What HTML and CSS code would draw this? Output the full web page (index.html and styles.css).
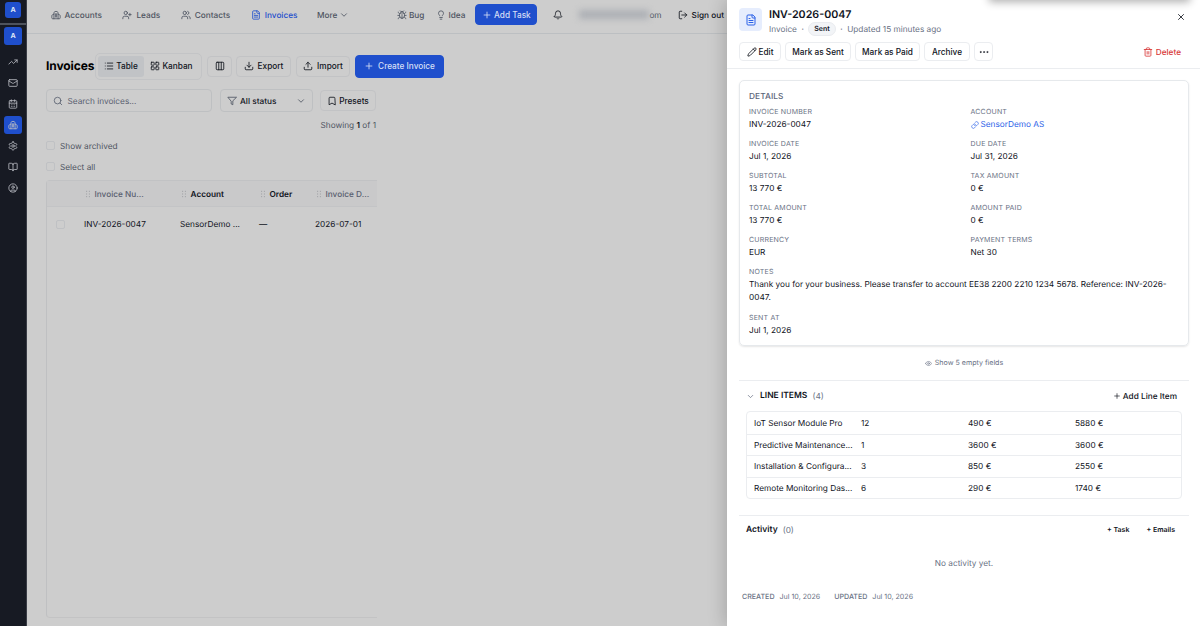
FILE: index.html
```html
<!DOCTYPE html>
<html lang="en">
<head>
  <meta charset="UTF-8">
  <meta name="viewport" content="width=device-width, initial-scale=1.0">
  <title>Invoices</title>
  <link rel="stylesheet" href="styles.css">
</head>
<body>

  <!-- Icons -->
  <svg class="sprite" xmlns="http://www.w3.org/2000/svg">
    <symbol id="building" viewBox="0 0 24 24"><path d="M7 21V6.500a2 2 0 0 1 1.200-1.800L12 3l3.800 1.700A2 2 0 0 1 17 6.500V21"/><path d="M7 10l-3.500 1.500A2 2 0 0 0 2 13.400V19a2 2 0 0 0 2 2h16a2 2 0 0 0 2-2v-5.600a2 2 0 0 0-1.500-1.900L17 10"/><path d="M10.500 9v8M13.500 9v8"/></symbol>
    <symbol id="user-plus" viewBox="0 0 24 24"><path d="M16 21v-2a4 4 0 0 0-4-4H6a4 4 0 0 0-4 4v2"/><circle cx="9" cy="7" r="4"/><path d="M19 8v6M22 11h-6"/></symbol>
    <symbol id="users" viewBox="0 0 24 24"><path d="M16 21v-2a4 4 0 0 0-4-4H6a4 4 0 0 0-4 4v2"/><circle cx="9" cy="7" r="4"/><path d="M22 21v-2a4 4 0 0 0-3-3.870M16 3.130a4 4 0 0 1 0 7.750"/></symbol>
    <symbol id="file" viewBox="0 0 24 24"><path d="M15 2H6a2 2 0 0 0-2 2v16a2 2 0 0 0 2 2h12a2 2 0 0 0 2-2V7Z"/><path d="M14 2v4a2 2 0 0 0 2 2h4M10 9H8M16 13H8M16 17H8"/></symbol>
    <symbol id="chevron" viewBox="0 0 24 24"><path d="m6 9 6 6 6-6"/></symbol>
    <symbol id="bug" viewBox="0 0 24 24"><path d="m8 2 1.880 1.880M14.120 3.880 16 2M9 7.130v-1a3 3 0 1 1 6 0v1"/><path d="M12 20a6 6 0 0 1-6-6v-3a4 4 0 0 1 4-4h4a4 4 0 0 1 4 4v3a6 6 0 0 1-6 6M12 20v-9"/><path d="M6.500 9C4.600 8.800 3 7.100 3 5M6 13H2M3 21c0-2.100 1.700-3.900 3.800-4M21 5c0 2.100-1.600 3.800-3.500 4M22 13h-4M17.200 17c2.100.1 3.800 1.900 3.800 4"/></symbol>
    <symbol id="bulb" viewBox="0 0 24 24"><path d="M15 14c.2-1 .7-1.700 1.500-2.500C17.500 10.600 18 9.300 18 8A6 6 0 0 0 6 8c0 1 .2 2.200 1.500 3.500.7.7 1.300 1.500 1.500 2.500M9 18h6M10 22h4"/></symbol>
    <symbol id="plus" viewBox="0 0 24 24"><path d="M5 12h14M12 5v14"/></symbol>
    <symbol id="bell" viewBox="0 0 24 24"><path d="M10.300 21a1.940 1.940 0 0 0 3.400 0"/><path d="M3.300 15.300A1 1 0 0 0 4 17h16a1 1 0 0 0 .7-1.700C19.400 14 18 12.500 18 8A6 6 0 0 0 6 8c0 4.500-1.400 6-2.700 7.300"/></symbol>
    <symbol id="logout" viewBox="0 0 24 24"><path d="M9 21H5a2 2 0 0 1-2-2V5a2 2 0 0 1 2-2h4M16 17l5-5-5-5M21 12H9"/></symbol>
    <symbol id="trend" viewBox="0 0 24 24"><path d="m22 7-8.500 8.500-5-5L2 17M16 7h6v6"/></symbol>
    <symbol id="mail" viewBox="0 0 24 24"><rect x="2" y="4" width="20" height="16" rx="2"/><path d="m22 7-8.970 5.700a1.940 1.940 0 0 1-2.060 0L2 7"/></symbol>
    <symbol id="calendar" viewBox="0 0 24 24"><path d="M8 2v4M16 2v4M3 10h18M8 14h.01M12 14h.01M16 14h.01M8 18h.01M12 18h.01M16 18h.01"/><rect x="3" y="4" width="18" height="18" rx="2"/></symbol>
    <symbol id="gear" viewBox="0 0 24 24"><path d="M12.220 2h-.44a2 2 0 0 0-2 2v.18a2 2 0 0 1-1 1.730l-.43.25a2 2 0 0 1-2 0l-.15-.08a2 2 0 0 0-2.730.73l-.22.38a2 2 0 0 0 .73 2.730l.15.1a2 2 0 0 1 1 1.720v.51a2 2 0 0 1-1 1.740l-.15.09a2 2 0 0 0-.73 2.730l.22.38a2 2 0 0 0 2.730.73l.15-.08a2 2 0 0 1 2 0l.43.25a2 2 0 0 1 1 1.730V20a2 2 0 0 0 2 2h.44a2 2 0 0 0 2-2v-.18a2 2 0 0 1 1-1.730l.43-.25a2 2 0 0 1 2 0l.15.08a2 2 0 0 0 2.730-.73l.22-.39a2 2 0 0 0-.73-2.730l-.15-.08a2 2 0 0 1-1-1.740v-.5a2 2 0 0 1 1-1.740l.15-.09a2 2 0 0 0 .73-2.730l-.22-.38a2 2 0 0 0-2.730-.73l-.15.08a2 2 0 0 1-2 0l-.43-.25a2 2 0 0 1-1-1.730V4a2 2 0 0 0-2-2z"/><circle cx="12" cy="12" r="3"/></symbol>
    <symbol id="book" viewBox="0 0 24 24"><path d="M12 7v14M3 18a1 1 0 0 1-1-1V4a1 1 0 0 1 1-1h5a4 4 0 0 1 4 4 4 4 0 0 1 4-4h5a1 1 0 0 1 1 1v13a1 1 0 0 1-1 1h-6a3 3 0 0 0-3 3 3 3 0 0 0-3-3z"/></symbol>
    <symbol id="user" viewBox="0 0 24 24"><circle cx="12" cy="12" r="10"/><circle cx="12" cy="10" r="3"/><path d="M7 20.700V19a2 2 0 0 1 2-2h6a2 2 0 0 1 2 2v1.700"/></symbol>
    <symbol id="list" viewBox="0 0 24 24"><path d="M8 5h13M8 12h13M8 19h13M3 5h.01M3 12h.01M3 19h.01"/></symbol>
    <symbol id="grid" viewBox="0 0 24 24"><rect x="3" y="3" width="7" height="7" rx="1"/><rect x="14" y="3" width="7" height="7" rx="1"/><rect x="14" y="14" width="7" height="7" rx="1"/><rect x="3" y="14" width="7" height="7" rx="1"/></symbol>
    <symbol id="columns" viewBox="0 0 24 24"><rect x="3" y="3" width="18" height="18" rx="2"/><path d="M9 3v18M15 3v18"/></symbol>
    <symbol id="download" viewBox="0 0 24 24"><path d="M21 15v4a2 2 0 0 1-2 2H5a2 2 0 0 1-2-2v-4M7 10l5 5 5-5M12 15V3"/></symbol>
    <symbol id="upload" viewBox="0 0 24 24"><path d="M21 15v4a2 2 0 0 1-2 2H5a2 2 0 0 1-2-2v-4M17 8l-5-5-5 5M12 3v12"/></symbol>
    <symbol id="search" viewBox="0 0 24 24"><circle cx="11" cy="11" r="8"/><path d="m21 21-4.300-4.300"/></symbol>
    <symbol id="funnel" viewBox="0 0 24 24"><path d="M22 3H2l8 9.460V19l4 2v-8.540z"/></symbol>
    <symbol id="bookmark" viewBox="0 0 24 24"><path d="m19 21-7-4-7 4V5a2 2 0 0 1 2-2h10a2 2 0 0 1 2 2z"/></symbol>
    <symbol id="grip" viewBox="0 0 24 24"><path d="M8 4h.01M8 12h.01M8 20h.01M16 4h.01M16 12h.01M16 20h.01"/></symbol>
    <symbol id="pencil" viewBox="0 0 24 24"><path d="M21.170 6.810a1 1 0 0 0-3.980-3.990L3.840 16.170a2 2 0 0 0-.5.830l-1.320 4.350a.5.5 0 0 0 .62.620l4.350-1.320a2 2 0 0 0 .83-.5zM15 5l4 4"/></symbol>
    <symbol id="dots" viewBox="0 0 24 24"><circle cx="4" cy="12" r="1.500"/><circle cx="12" cy="12" r="1.500"/><circle cx="20" cy="12" r="1.500"/></symbol>
    <symbol id="trash" viewBox="0 0 24 24"><path d="M3 6h18M19 6v14a2 2 0 0 1-2 2H7a2 2 0 0 1-2-2V6M8 6V4a2 2 0 0 1 2-2h4a2 2 0 0 1 2 2v2M10 11v6M14 11v6"/></symbol>
    <symbol id="close" viewBox="0 0 24 24"><path d="M18 6 6 18M6 6l12 12"/></symbol>
    <symbol id="link" viewBox="0 0 24 24"><path d="M10 13a5 5 0 0 0 7.540.54l3-3a5 5 0 0 0-7.070-7.070l-1.720 1.710"/><path d="M14 11a5 5 0 0 0-7.540-.54l-3 3a5 5 0 0 0 7.070 7.070l1.710-1.710"/></symbol>
    <symbol id="eye" viewBox="0 0 24 24"><path d="M2.060 12.350a1 1 0 0 1 0-.7 10.750 10.750 0 0 1 19.880 0 1 1 0 0 1 0 .7 10.750 10.750 0 0 1-19.880 0"/><circle cx="12" cy="12" r="3"/></symbol>
  </svg>

  <div class="app">

    <aside class="sidebar">
      <div class="brand"><span class="logo">A</span></div>
      <span class="logo logo-lg">A</span>
      <nav class="side-nav">
        <a><svg class="icon"><use href="#trend"/></svg></a>
        <a><svg class="icon"><use href="#mail"/></svg></a>
        <a><svg class="icon"><use href="#calendar"/></svg></a>
        <a class="active"><svg class="icon"><use href="#building"/></svg></a>
        <a><svg class="icon"><use href="#gear"/></svg></a>
        <a><svg class="icon"><use href="#book"/></svg></a>
        <a><svg class="icon"><use href="#user"/></svg></a>
      </nav>
    </aside>

    <div class="main">
      <header class="topbar">
        <nav class="top-nav">
          <a><svg class="icon"><use href="#building"/></svg>Accounts</a>
          <a><svg class="icon"><use href="#user-plus"/></svg>Leads</a>
          <a><svg class="icon"><use href="#users"/></svg>Contacts</a>
          <a class="active"><svg class="icon"><use href="#file"/></svg>Invoices</a>
          <a class="more-link">More<svg class="icon"><use href="#chevron"/></svg></a>
        </nav>
        <div class="top-actions">
          <a class="bug"><svg class="icon"><use href="#bug"/></svg>Bug</a>
          <a class="idea"><svg class="icon"><use href="#bulb"/></svg>Idea</a>
          <button class="btn btn-primary add-task"><svg class="icon"><use href="#plus"/></svg>Add Task</button>
          <svg class="icon bell"><use href="#bell"/></svg>
          <span class="email"><span class="email-hidden"></span>om</span>
          <a class="sign-out"><svg class="icon"><use href="#logout"/></svg>Sign out</a>
        </div>
      </header>

      <main class="content">
        <div class="title-row">
          <h1>Invoices</h1>
          <div class="view-switch">
            <button class="selected"><svg class="icon"><use href="#list"/></svg>Table</button>
            <button><svg class="icon"><use href="#grid"/></svg>Kanban</button>
          </div>
          <button class="btn columns-btn"><svg class="icon"><use href="#columns"/></svg></button>
          <button class="btn export-btn"><svg class="icon"><use href="#download"/></svg>Export</button>
          <button class="btn import-btn"><svg class="icon"><use href="#upload"/></svg>Import</button>
          <button class="btn btn-primary create-btn"><svg class="icon"><use href="#plus"/></svg>Create Invoice</button>
        </div>

        <div class="filter-row">
          <div class="search"><svg class="icon"><use href="#search"/></svg>Search invoices...</div>
          <div class="status"><svg class="icon"><use href="#funnel"/></svg><span>All status</span><svg class="icon"><use href="#chevron"/></svg></div>
          <button class="btn presets"><svg class="icon"><use href="#bookmark"/></svg>Presets</button>
        </div>

        <p class="showing">Showing <b>1</b> of 1</p>
        <div class="check-row"><span class="checkbox"></span>Show archived</div>
        <div class="check-row"><span class="checkbox"></span>Select all</div>

        <div class="table-box">
          <div class="table-row table-head">
            <span></span>
            <span class="muted"><svg class="icon"><use href="#grip"/></svg>Invoice Nu...</span>
            <span><svg class="icon"><use href="#grip"/></svg>Account</span>
            <span><svg class="icon"><use href="#grip"/></svg>Order</span>
            <span class="muted"><svg class="icon"><use href="#grip"/></svg>Invoice D...</span>
          </div>
          <div class="table-row">
            <span><i class="checkbox"></i></span>
            <span>INV-2026-0047</span>
            <span>SensorDemo ...</span>
            <span>—</span>
            <span>2026-07-01</span>
          </div>
        </div>
      </main>
    </div>

    <!-- Invoice detail drawer -->
    <section class="drawer">
      <div class="toast-shadow"></div>
      <header class="drawer-head">
        <div class="record">
          <div class="record-icon"><svg class="icon"><use href="#file"/></svg></div>
          <div class="record-text">
            <h2>INV-2026-0047</h2>
            <p>Invoice <i>·</i> <span class="badge">Sent</span> <i>·</i> Updated 15 minutes ago</p>
          </div>
          <svg class="icon close"><use href="#close"/></svg>
        </div>
        <div class="record-actions">
          <button class="btn edit"><svg class="icon"><use href="#pencil"/></svg>Edit</button>
          <button class="btn mark-sent">Mark as Sent</button>
          <button class="btn mark-paid">Mark as Paid</button>
          <button class="btn archive">Archive</button>
          <button class="btn more"><svg class="icon"><use href="#dots"/></svg></button>
          <a class="delete"><svg class="icon"><use href="#trash"/></svg>Delete</a>
        </div>
      </header>

      <div class="drawer-body">
        <div class="card">
          <h3>DETAILS</h3>
          <dl class="fields">
            <div><dt>INVOICE NUMBER</dt><dd>INV-2026-0047</dd></div>
            <div><dt>ACCOUNT</dt><dd class="link"><svg class="icon"><use href="#link"/></svg>SensorDemo AS</dd></div>
            <div><dt>INVOICE DATE</dt><dd>Jul 1, 2026</dd></div>
            <div><dt>DUE DATE</dt><dd>Jul 31, 2026</dd></div>
            <div><dt>SUBTOTAL</dt><dd>13 770 €</dd></div>
            <div><dt>TAX AMOUNT</dt><dd>0 €</dd></div>
            <div><dt>TOTAL AMOUNT</dt><dd>13 770 €</dd></div>
            <div><dt>AMOUNT PAID</dt><dd>0 €</dd></div>
            <div><dt>CURRENCY</dt><dd>EUR</dd></div>
            <div><dt>PAYMENT TERMS</dt><dd>Net 30</dd></div>
            <div class="wide notes"><dt>NOTES</dt><dd>Thank you for your business. Please transfer to account EE38 2200 2210 1234 5678. Reference: INV-2026-<br>0047.</dd></div>
            <div class="wide"><dt>SENT AT</dt><dd>Jul 1, 2026</dd></div>
          </dl>
        </div>

        <div class="show-empty"><svg class="icon"><use href="#eye"/></svg>Show 5 empty fields</div>

        <div class="section line-items">
          <div class="section-head">
            <svg class="icon"><use href="#chevron"/></svg>
            <h4>LINE ITEMS</h4><span class="count">(4)</span>
            <a><svg class="icon"><use href="#plus"/></svg>Add Line Item</a>
          </div>
          <div class="items">
            <div class="item"><span>IoT Sensor Module Pro</span><span>12</span><span>490 €</span><span>5880 €</span></div>
            <div class="item"><span>Predictive Maintenance...</span><span>1</span><span>3600 €</span><span>3600 €</span></div>
            <div class="item"><span>Installation &amp; Configura...</span><span>3</span><span>850 €</span><span>2550 €</span></div>
            <div class="item"><span>Remote Monitoring Das...</span><span>6</span><span>290 €</span><span>1740 €</span></div>
          </div>
        </div>

        <div class="section activity">
          <div class="section-head">
            <h4>Activity</h4><span class="count">(0)</span>
            <a>+ Task</a>
            <a>+ Emails</a>
          </div>
          <p class="empty">No activity yet.</p>
        </div>

        <footer class="stamps">
          <span><b>CREATED</b>Jul 10, 2026</span>
          <span><b>UPDATED</b>Jul 10, 2026</span>
        </footer>
      </div>
    </section>

  </div>

</body>
</html>
```

FILE: styles.css
```css
* {
  box-sizing: border-box;
}

body {
  margin: 0;
  font-family: Inter, "Liberation Sans", sans-serif;
  font-size: 8.250px;
  line-height: 12px;
  text-rendering: geometricPrecision;
  color: #10131c;
  background-color: #cdcdcd;
}

h1, h2, h3, h4, p, dl, dd {
  margin: 0;
}

button {
  font: inherit;
  color: inherit;
  background: none;
  border: none;
  padding: 0;
}

.sprite {
  display: none;
}

.icon {
  width: 10px;
  height: 10px;
  flex: none;
  fill: none;
  stroke: currentColor;
  stroke-width: 2;
  stroke-linecap: round;
  stroke-linejoin: round;
}

.app {
  display: flex;
  height: 626px;
  overflow: hidden;
}

/* Sidebar */
.sidebar {
  width: 27px;
  flex: none;
  display: flex;
  flex-direction: column;
  align-items: center;
  background-color: #171a23;
  border-right: 1px solid #3a3d46;
  color: #b9bcc3;
}

.brand {
  width: 100%;
  height: 25px;
  padding-top: 2px;
  display: flex;
  justify-content: center;
  align-items: flex-start;
  border-bottom: 2px solid #4e535d;
}

.logo {
  width: 16px;
  height: 16px;
  display: flex;
  align-items: center;
  justify-content: center;
  border-radius: 3px;
  background-color: #1f4fcc;
  color: #dfe5f5;
  font-size: 7px;
  font-weight: 700;
}

.logo-lg {
  width: 18px;
  height: 18px;
  margin-top: 2px;
}

.side-nav {
  display: flex;
  flex-direction: column;
  gap: 3px;
  margin-top: 8px;
}

.side-nav a {
  width: 18px;
  height: 18px;
  display: flex;
  align-items: center;
  justify-content: center;
  border-radius: 3px;
}

.side-nav .active {
  background-color: #1f4fcc;
}

/* Top bar */
.main {
  width: 700px;
  flex: none;
  display: flex;
  flex-direction: column;
  overflow: hidden;
}

.topbar {
  height: 34px;
  flex: none;
  display: flex;
  align-items: center;
  padding: 0 3px 4px 23.500px;
  border-bottom: 1px solid #bcbfc2;
  color: #4d5461;
  font-weight: 500;
}

.top-nav, .top-actions {
  display: flex;
  align-items: center;
}

.top-nav {
  gap: 20.500px;
}

.top-nav a, .top-actions a {
  display: flex;
  align-items: center;
  gap: 4px;
  white-space: nowrap;
}

.top-nav .more-link {
  gap: 2px;
  margin-left: -1px;
}

.top-nav .active {
  color: #1f4fcc;
}

.top-actions {
  margin-left: auto;
}

.top-actions .bug, .top-actions .idea {
  gap: 2px;
}

.idea {
  margin-left: 12px;
}

.btn {
  display: flex;
  align-items: center;
  justify-content: center;
  flex: none;
  border: 1px solid #c2c3c5;
  border-radius: 4px;
  font-weight: 500;
  white-space: nowrap;
}

.btn-primary {
  background-color: #1f4fcc;
  border-color: #1f4fcc;
  color: #d6dff5;
}

.add-task {
  width: 62px;
  height: 21px;
  gap: 2px;
  margin-left: 10px;
}

.bell {
  margin-left: 16px;
  color: #10131c;
}

.email {
  display: flex;
  align-items: center;
  margin-left: 16px;
  font-weight: 400;
}

.email-hidden {
  width: 70px;
  height: 9px;
  background-color: #adb0b5;
  filter: blur(3px);
}

.top-actions .sign-out {
  margin-left: 16px;
  color: #10131c;
}

/* Invoice list */
.content {
  flex: 1;
  min-height: 0;
  display: flex;
  flex-direction: column;
  padding: 18px 0 8px 19px;
}

.title-row {
  display: flex;
  align-items: center;
  height: 28px;
}

h1 {
  width: 49px;
  font-size: 12px;
  font-weight: 700;
  letter-spacing: -0.1px;
  color: #000;
}

.view-switch {
  display: flex;
  width: 107px;
  height: 27px;
  padding: 2px;
  border: 1px solid #c3c4c6;
  border-radius: 5px;
}

.view-switch button {
  width: 46px;
  display: flex;
  align-items: center;
  justify-content: center;
  gap: 2px;
  border-radius: 3px;
  font-weight: 500;
}

.view-switch button + button {
  width: 55px;
}

.view-switch .selected {
  background-color: #c1c3c6;
}

.title-row .btn {
  height: 21px;
  gap: 4px;
}

.columns-btn {
  width: 25px;
  margin-left: 5px;
}

.export-btn {
  width: 55px;
  margin-left: 4px;
}

.import-btn {
  width: 54px;
  margin-left: 5px;
}

.title-row .create-btn {
  width: 89px;
  height: 23px;
  gap: 4px;
  margin-left: 5px;
}

.filter-row {
  display: flex;
  align-items: center;
  height: 23px;
  margin-top: 9px;
}

.search, .status {
  display: flex;
  align-items: center;
  height: 23px;
  padding: 0 6px;
  border: 1px solid #bec0c2;
  border-radius: 4px;
}

.search {
  width: 166px;
  gap: 4.500px;
  color: #596070;
}

.status {
  width: 93px;
  gap: 3px;
  margin-left: 8px;
  font-weight: 500;
}

.status .icon {
  color: #4d5461;
}

.status span {
  flex: 1;
}

.presets {
  width: 56px;
  height: 21px;
  gap: 2px;
  margin-left: 7px;
}

.showing {
  width: 330px;
  margin: 7px 0 4px;
  text-align: right;
  color: #4d5461;
}

.showing b {
  font-weight: 600;
  color: #10131c;
}

.check-row {
  display: flex;
  align-items: center;
  height: 21px;
  gap: 5px;
  color: #4d5461;
}

.checkbox {
  width: 9px;
  height: 9px;
  border: 1px solid #bfc1c4;
  border-radius: 2px;
}

.table-box {
  flex: 1;
  width: 331px;
  margin-top: 3px;
  border-top: 1px solid #c1c2c4;
  border-left: 1px solid #bfc0c2;
  border-bottom: 1px solid #c3c3c4;
  border-radius: 4px 0 0 4px;
}

.table-row {
  display: grid;
  grid-template-columns: 37px 96px 79px 56px 62px;
  align-items: center;
  height: 34px;
  white-space: nowrap;
}

.table-row span:first-child {
  padding-left: 9px;
}

.table-row i {
  display: block;
}

.table-head {
  height: 26px;
  background-color: #c9c9ca;
  border-bottom: 1px solid #c3c4c6;
  font-weight: 600;
}

.table-head span {
  display: flex;
  align-items: center;
  gap: 2.500px;
}

.table-head .icon {
  width: 8px;
  height: 8px;
  color: #777a82;
}

.table-head .muted {
  color: #596070;
  font-weight: 500;
}

/* Drawer */
.drawer {
  position: relative;
  width: 473px;
  flex: none;
  display: flex;
  flex-direction: column;
  background-color: #fff;
  box-shadow: -3px 0 16px rgba(0, 0, 0, 0.18);
}

.drawer .btn {
  border-color: #ebedf0;
}

.toast-shadow {
  position: absolute;
  top: -12px;
  left: 262px;
  width: 201px;
  height: 12px;
  box-shadow: 0 2px 9px rgba(0, 0, 0, 0.32);
}

.drawer-head {
  height: 69px;
  padding: 8px 12px 0;
  border-bottom: 1px solid #ebedf0;
}

.record {
  display: flex;
  height: 34px;
}

.record-icon {
  width: 23px;
  height: 23px;
  display: flex;
  align-items: center;
  justify-content: center;
  border-radius: 4px;
  background-color: #e6edfd;
  color: #2c62e8;
}

.record-icon .icon {
  width: 12px;
  height: 12px;
}

.record-text {
  flex: 1;
  padding-left: 7px;
}

h2 {
  font-size: 10.700px;
  line-height: 13px;
  font-weight: 600;
}

.record-text p {
  display: flex;
  align-items: center;
  height: 12px;
  margin-top: 2px;
  color: #697184;
}

.record-text i {
  margin: 0 4.500px;
  font-style: normal;
}

.badge {
  padding: 0 5px;
  border: 1px solid #e9ebef;
  border-radius: 7px;
  background-color: #f2f4f7;
  color: #10131c;
  font-size: 7px;
  font-weight: 600;
}

.close {
  margin: 4px 2px 0 0;
}

.record-actions {
  display: flex;
  gap: 4px;
}

.record-actions .btn {
  height: 19px;
}

.edit {
  width: 42px;
  gap: 2px;
}

.mark-sent {
  width: 66px;
}

.mark-paid {
  width: 65px;
}

.archive {
  width: 46px;
}

.more {
  width: 19px;
}

.more .icon {
  fill: currentColor;
  stroke-width: 1;
}

.delete {
  display: flex;
  align-items: center;
  gap: 3px;
  margin: 0 7px 0 auto;
  color: #d83a3a;
  font-weight: 500;
}

.drawer-body {
  padding: 11px 11px 0 12px;
}

.card {
  height: 266px;
  padding: 10px 9px;
  border: 1px solid #e6e9ec;
  border-radius: 5px;
  box-shadow: 0 1px 2px rgba(0, 0, 0, 0.1);
}

h3 {
  font-size: 8.300px;
  font-weight: 500;
  letter-spacing: 0.1px;
  color: #5b6478;
}

.fields {
  display: grid;
  grid-template-columns: 1fr 1fr;
  column-gap: 13px;
  row-gap: 7px;
  margin-top: 3px;
}

.fields > div {
  height: 25px;
}

.fields .wide {
  grid-column: 1 / -1;
}

.fields .notes {
  height: 39px;
}

dt {
  font-size: 7px;
  line-height: 12px;
  letter-spacing: 0.2px;
  color: #697184;
}

dd {
  display: block;
  line-height: 13px;
}

dd.link {
  display: flex;
  align-items: center;
  gap: 2px;
  color: #2c62e8;
}

.link .icon {
  width: 8px;
  height: 8px;
}

.show-empty {
  display: flex;
  align-items: center;
  justify-content: center;
  height: 34px;
  gap: 3px;
  font-size: 7.100px;
  color: #697184;
}

.show-empty .icon {
  width: 7px;
  height: 7px;
}

.section {
  border-top: 1px solid #ebedf0;
  padding: 0 7px;
}

.section-head {
  display: flex;
  align-items: center;
  height: 30px;
}

.section-head h4 {
  font-size: 8.500px;
  font-weight: 600;
}

.section-head > .icon {
  width: 9px;
  height: 9px;
  margin-right: 5px;
  color: #697184;
}

.section-head .count {
  flex: 1;
  margin-left: 5px;
  color: #697184;
}

.section-head a {
  display: flex;
  align-items: center;
  gap: 2px;
  margin-right: 5px;
  font-weight: 500;
}

.section-head a .icon {
  width: 8px;
  height: 8px;
}

.line-items {
  height: 135px;
}

.items {
  border: 1px solid #ebedf0;
  border-radius: 4px;
}

.item {
  display: grid;
  grid-template-columns: 107px 107px 107px 1fr;
  align-items: center;
  height: 21.600px;
  padding-left: 7px;
  border-top: 1px solid #ebedf0;
  white-space: nowrap;
}

.item:first-child {
  border-top: none;
}

.activity .section-head {
  height: 28px;
}

.activity .section-head a {
  margin: 0 7px 0 10px;
  font-size: 7px;
  font-weight: 600;
}

.empty {
  margin-top: 13px;
  text-align: center;
  color: #697184;
}

.stamps {
  display: flex;
  gap: 14px;
  margin: 22px 0 0 3px;
  font-size: 7.100px;
  color: #697184;
}

.stamps b {
  margin-right: 5px;
  font-weight: 500;
}
```
